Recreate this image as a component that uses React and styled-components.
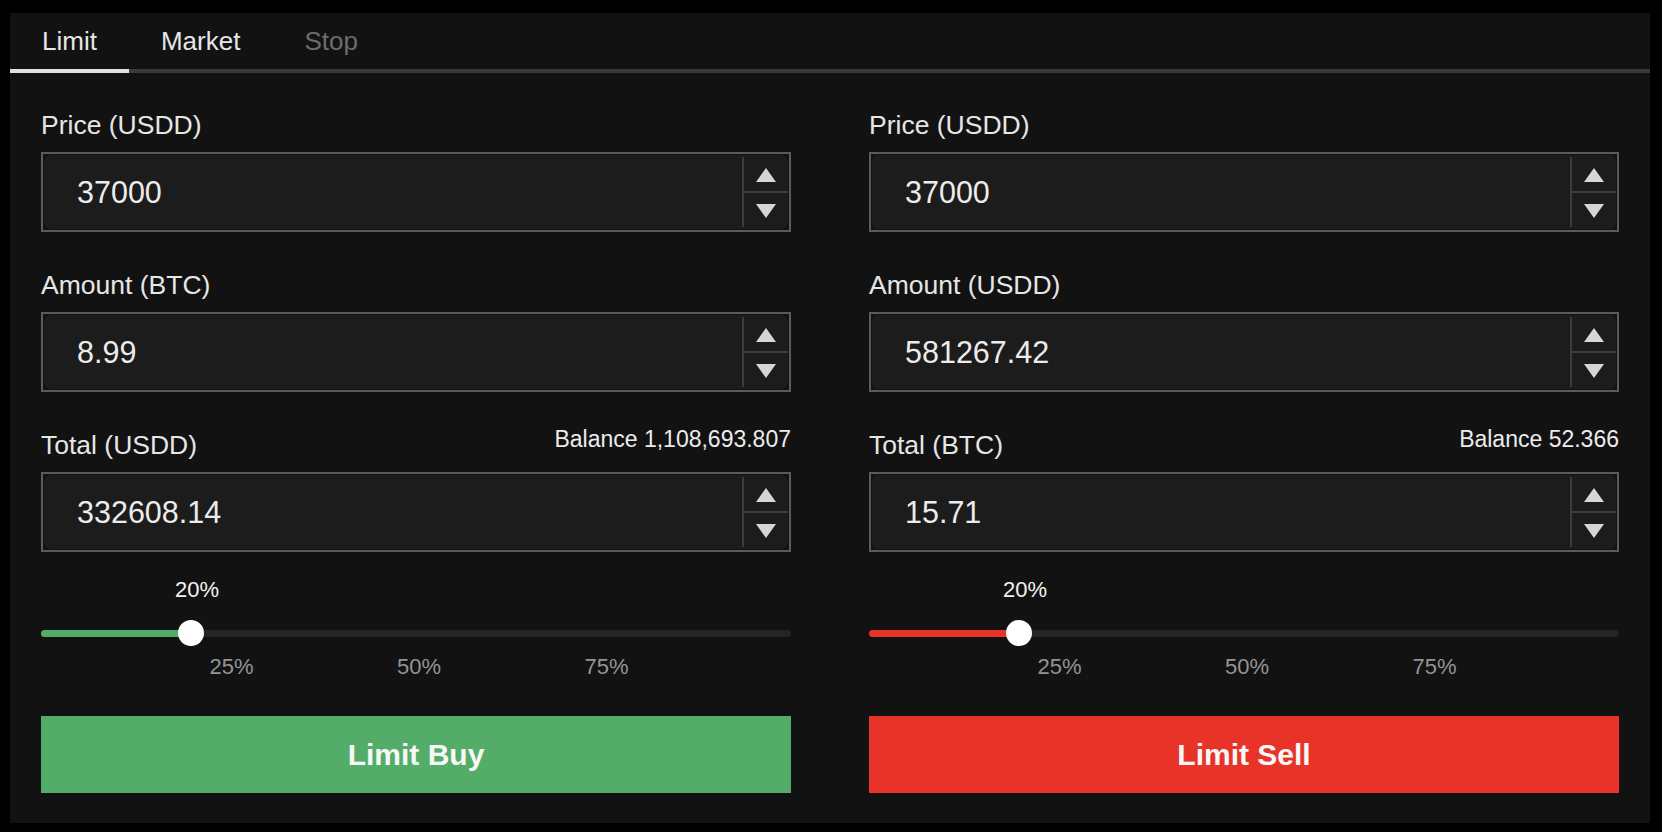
import React from 'react';
import styled, { createGlobalStyle, css } from 'styled-components';

const GREEN = '#53ad69';
const RED = '#e83428';

const GlobalStyle = createGlobalStyle`
  html, body {
    margin: 0;
    padding: 0;
    background: #000;
  }
  body {
    font-family: "Liberation Sans", Arial, Helvetica, sans-serif;
    color: #e8e8e8;
  }
  * {
    box-sizing: border-box;
  }
`;

const Page = styled.div`
  width: 1662px;
  height: 832px;
  padding: 13px 12px 9px 10px;
  background: #000;
`;

const Panel = styled.div`
  height: 100%;
  background: #121212;
  display: flex;
  flex-direction: column;
`;

const TabBar = styled.div`
  display: flex;
  border-bottom: 4px solid #3a3a3a;
`;

const Tab = styled.div`
  height: 56px;
  line-height: 56px;
  padding: 0 32px;
  font-size: 26px;
  color: ${({ disabled }) => (disabled ? '#6c6c6c' : '#e6e6e6')};
  position: relative;

  ${({ active }) =>
    active &&
    css`
      &::after {
        content: '';
        position: absolute;
        left: 0;
        right: 0;
        bottom: -4px;
        height: 4px;
        background: #e2e2e2;
      }
    `}
`;

const Columns = styled.div`
  display: grid;
  grid-template-columns: 750px 750px;
  column-gap: 78px;
  padding: 37px 31px 30px 31px;
`;

const Form = styled.div`
  display: flex;
  flex-direction: column;
`;

const FieldGroup = styled.div`
  display: flex;
  flex-direction: column;
  gap: 12px;
  & + & {
    margin-top: 38px;
  }
`;

const LabelRow = styled.div`
  display: flex;
  justify-content: space-between;
  align-items: flex-start;
  height: 30px;
`;

const Label = styled.div`
  font-size: 26.5px;
  line-height: 30px;
  color: #e6e6e6;
`;

const Balance = styled.div`
  font-size: 23px;
  line-height: 19px;
  color: #ececec;
`;

const InputBox = styled.div`
  height: 80px;
  border: 2px solid #5b5b5b;
  padding: 1px;
  background: #131313;
`;

const InputInner = styled.div`
  height: 100%;
  display: flex;
  background: #1c1c1c;
  border-radius: 7px;
`;

const NumberInput = styled.input`
  flex: 1;
  min-width: 0;
  background: transparent;
  border: none;
  outline: none;
  padding: 0 0 0 33px;
  font-family: inherit;
  font-size: 30.5px;
  color: #ececec;
`;

const Spinner = styled.div`
  width: 46px;
  margin: 2px 0;
  border-left: 2px solid #3c3c3c;
  display: flex;
  flex-direction: column;
`;

const SpinButton = styled.div`
  flex: 1;
  display: flex;
  align-items: center;
  justify-content: center;
  ${({ up }) => up && 'border-bottom: 2px solid #3c3c3c;'}

  &::before {
    content: '';
    width: 0;
    height: 0;
    border-left: 10.5px solid transparent;
    border-right: 10.5px solid transparent;
    ${({ up }) =>
      up
        ? 'border-bottom: 14px solid #d6d6d6; margin-top: 1px;'
        : 'border-top: 14px solid #d6d6d6; margin-top: 2px;'}
  }
`;

const SliderWrap = styled.div`
  margin-top: 26px;
  display: flex;
  flex-direction: column;
`;

const ValueRow = styled.div`
  position: relative;
  height: 24px;
`;

const ValueTag = styled.span`
  position: absolute;
  top: 0;
  transform: translateX(calc(-50% + 6px));
  font-size: 22px;
  line-height: 24px;
  color: #f2f2f2;
  white-space: nowrap;
`;

const TrackRow = styled.div`
  position: relative;
  height: 26px;
  margin-top: 18px;
  display: flex;
  align-items: center;
`;

const Track = styled.div`
  position: relative;
  width: 100%;
  height: 7px;
  border-radius: 4px;
  background: #252525;
`;

const TrackFill = styled.div`
  height: 100%;
  border-radius: 4px;
  background: ${({ color }) => color};
`;

const Thumb = styled.div`
  position: absolute;
  top: 50%;
  width: 26px;
  height: 26px;
  border-radius: 50%;
  background: #fff;
  transform: translate(-50%, -50%);
`;

const MarksRow = styled.div`
  position: relative;
  height: 24px;
  margin-top: 9px;
`;

const Mark = styled.span`
  position: absolute;
  top: 0;
  transform: translateX(calc(-50% + 3px));
  font-size: 22px;
  line-height: 24px;
  color: #949494;
`;

const ActionButton = styled.button`
  margin-top: 37px;
  height: 77px;
  width: 100%;
  border: none;
  background: ${({ color }) => color};
  color: #f7f7f7;
  font-family: inherit;
  font-size: 30px;
  font-weight: 700;
  cursor: pointer;
`;

const NumberField = ({ label, value, balance }) => (
  <FieldGroup>
    <LabelRow>
      <Label>{label}</Label>
      {balance && <Balance>Balance {balance}</Balance>}
    </LabelRow>
    <InputBox>
      <InputInner>
        <NumberInput defaultValue={value} />
        <Spinner>
          <SpinButton up />
          <SpinButton />
        </Spinner>
      </InputInner>
    </InputBox>
  </FieldGroup>
);

const PercentSlider = ({ value, color }) => (
  <SliderWrap>
    <ValueRow>
      <ValueTag style={{ left: `${value}%` }}>{value}%</ValueTag>
    </ValueRow>
    <TrackRow>
      <Track>
        <TrackFill color={color} style={{ width: `${value}%` }} />
        <Thumb style={{ left: `${value}%` }} />
      </Track>
    </TrackRow>
    <MarksRow>
      {[25, 50, 75].map((m) => (
        <Mark key={m} style={{ left: `${m}%` }}>{m}%</Mark>
      ))}
    </MarksRow>
  </SliderWrap>
);

const OrderForm = ({ fields, percent, color, action }) => (
  <Form>
    {fields.map((f) => (
      <NumberField key={f.label} {...f} />
    ))}
    <PercentSlider value={percent} color={color} />
    <ActionButton color={color}>{action}</ActionButton>
  </Form>
);

const buyFields = [
  { label: 'Price (USDD)', value: '37000' },
  { label: 'Amount (BTC)', value: '8.99' },
  { label: 'Total (USDD)', value: '332608.14', balance: '1,108,693.807' },
];

const sellFields = [
  { label: 'Price (USDD)', value: '37000' },
  { label: 'Amount (USDD)', value: '581267.42' },
  { label: 'Total (BTC)', value: '15.71', balance: '52.366' },
];

const App = () => (
  <>
    <GlobalStyle />
    <Page>
      <Panel>
        <TabBar>
          <Tab active>Limit</Tab>
          <Tab>Market</Tab>
          <Tab disabled>Stop</Tab>
        </TabBar>
        <Columns>
          <OrderForm fields={buyFields} percent={20} color={GREEN} action="Limit Buy" />
          <OrderForm fields={sellFields} percent={20} color={RED} action="Limit Sell" />
        </Columns>
      </Panel>
    </Page>
  </>
);

export default App;
